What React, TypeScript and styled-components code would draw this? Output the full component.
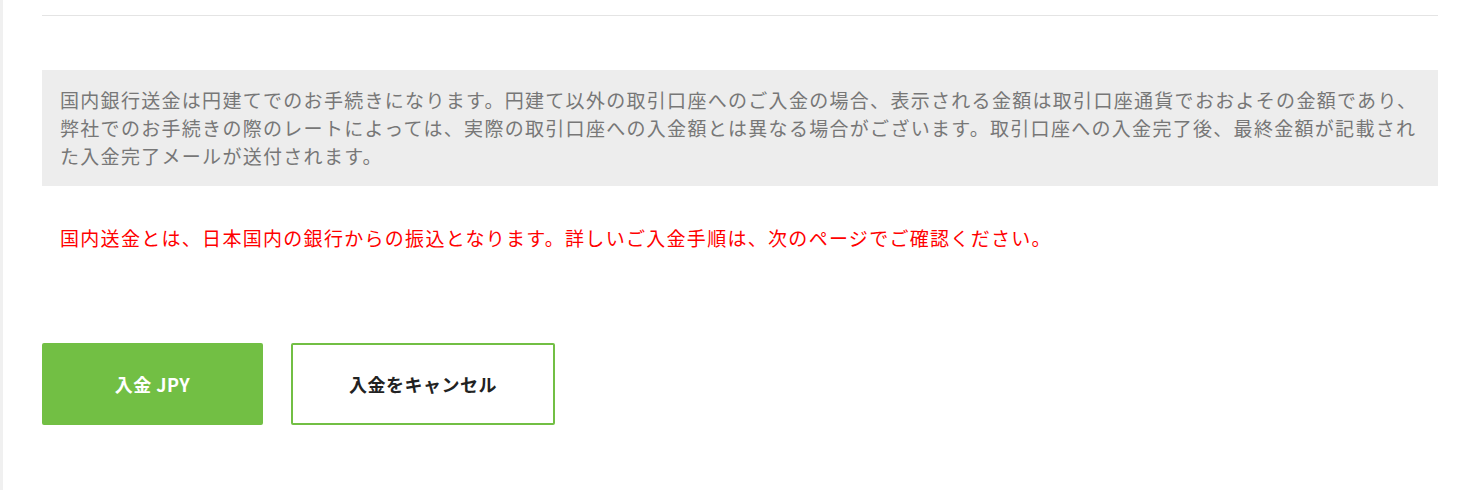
import React from "react";
import styled, { createGlobalStyle } from "styled-components";

const GlobalStyle = createGlobalStyle`
  html, body { margin: 0; padding: 0; background: #ffffff; }
  body {
    font-family: "Noto Sans CJK JP", "Noto Sans", sans-serif;
    border-left: 3px solid #f0f0f0;
    min-height: 490px;
    box-sizing: border-box;
  }
`;

const Page = styled.div`
  width: 1396px;
  margin-left: 39px;
  padding-top: 15px;
`;

const Divider = styled.hr`
  margin: 0;
  border: 0;
  border-top: 1px solid #e4e4e4;
  height: 0;
`;

const Notice = styled.div`
  margin-top: 54px;
  background: #ededed;
  padding: 16px 16px 16px 18px;
  color: #777777;
  font-size: 19px;
  letter-spacing: 1.3px;
  line-height: 28px;
`;

const Alert = styled.p`
  margin: 38px 0 0 18px;
  color: #ff0000;
  font-size: 19px;
  letter-spacing: 1.3px;
  line-height: 28px;
`;

const Actions = styled.div`
  display: flex;
  gap: 28px;
  margin-top: 91px;
`;

const Button = styled.button<{ $primary?: boolean; $width: number }>`
  box-sizing: border-box;
  width: ${(p) => p.$width}px;
  height: 82px;
  border-radius: 2px;
  border: 2px solid #72bf44;
  background: ${(p) => (p.$primary ? "#72bf44" : "#ffffff")};
  color: ${(p) => (p.$primary ? "#ffffff" : "#222222")};
  font-family: "Noto Sans CJK JP", "Open Sans", sans-serif;
  font-weight: 700;
  font-size: 18px;
  letter-spacing: 0.5px;
  display: flex;
  align-items: center;
  justify-content: center;
  cursor: pointer;
  padding: 0;
`;

export default function App() {
  return (
    <>
      <GlobalStyle />
      <Page>
        <Divider />
        <Notice>
          国内銀行送金は円建てでのお手続きになります。円建て以外の取引口座へのご入金の場合、表示される金額は取引口座通貨でおおよその金額であり、弊社でのお手続きの際のレートによっては、実際の取引口座への入金額とは異なる場合がございます。取引口座への入金完了後、最終金額が記載された入金完了メールが送付されます。
        </Notice>
        <Alert>
          国内送金とは、日本国内の銀行からの振込となります。詳しいご入金手順は、次のページでご確認ください。
        </Alert>
        <Actions>
          <Button $primary $width={221}>入金 JPY</Button>
          <Button $width={264}>入金をキャンセル</Button>
        </Actions>
      </Page>
    </>
  );
}
